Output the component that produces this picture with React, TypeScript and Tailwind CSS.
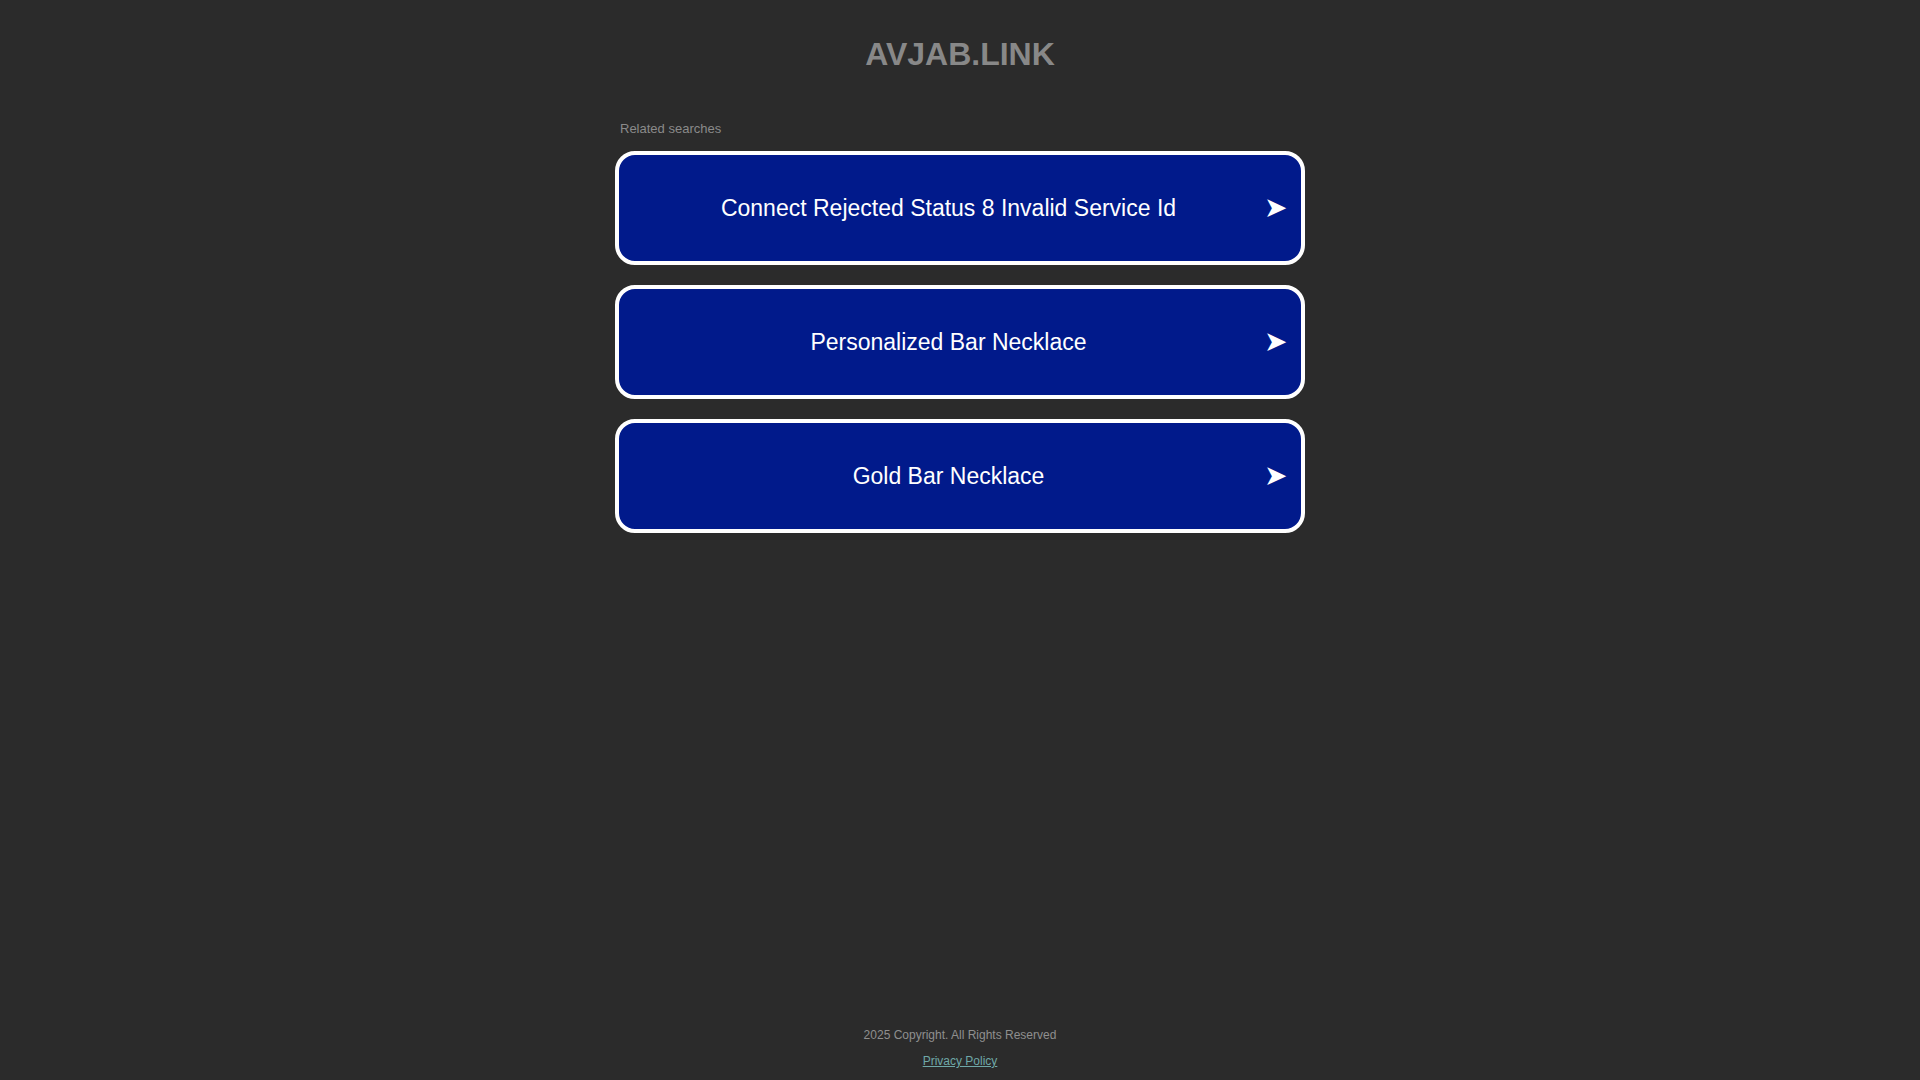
import React from 'react';

const SEARCHES = [
  'Connect Rejected Status 8 Invalid Service Id',
  'Personalized Bar Necklace',
  'Gold Bar Necklace',
];

export default function App() {
  return (
    <div className="min-h-screen bg-[#2b2b2b] flex flex-col font-['Liberation_Sans',Arial,sans-serif]">
      {/* Header */}
      <header className="pt-[36px] text-center">
        <h1 className="text-[32px] leading-[37px] font-bold text-[#888888]">AVJAB.LINK</h1>
      </header>

      {/* Related searches */}
      <main className="w-[690px] mx-auto mt-[48px]">
        <div className="pl-[5px] text-[13px] leading-[16px] text-[#8a8a8a]">Related searches</div>
        <ul className="mt-[14px] flex flex-col gap-[20px]">
          {SEARCHES.map((s) => (
            <li key={s}>
              <a
                href="#"
                className="h-[114px] flex items-center pl-[20px] pr-[14px] bg-[#011a8b] border-[4px] border-white rounded-[20px] text-white"
              >
                <span className="flex-1 text-center text-[23px] leading-[28px]">{s}</span>
                <span className="ml-[6px] text-[28px] leading-[28px]">➤</span>
              </a>
            </li>
          ))}
        </ul>
      </main>

      {/* Footer */}
      <footer className="mt-auto pb-[11px] text-center text-[12px] leading-[16px]">
        <div className="text-[#8f8f8f]">2025 Copyright. All Rights Reserved</div>
        <div className="mt-[10px]">
          <a href="#" className="text-[#6fa8a8] underline">Privacy Policy</a>
        </div>
      </footer>
    </div>
  );
}
